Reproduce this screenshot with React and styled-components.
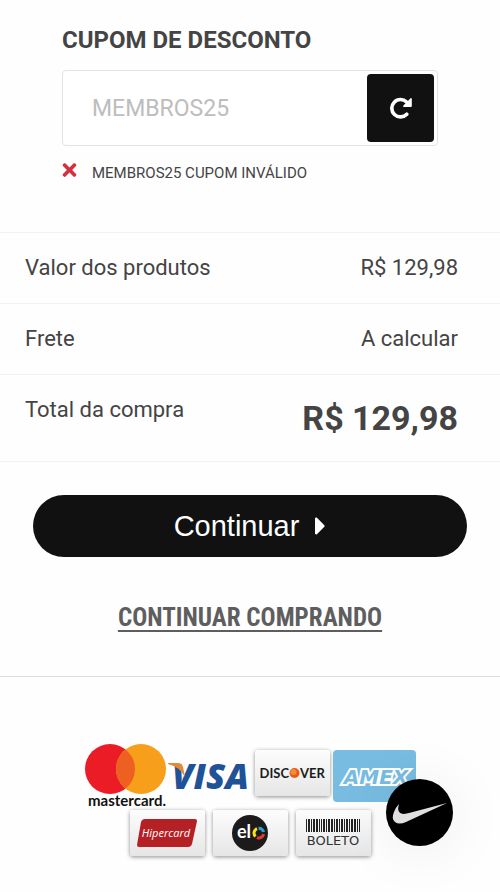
import React from 'react'
import styled, { createGlobalStyle } from 'styled-components'
import { FaCaretRight, FaTimes } from 'react-icons/fa'

const summary = [
  { label: 'Valor dos produtos', value: 'R$ 129,98' },
  { label: 'Frete', value: 'A calcular' },
  { label: 'Total da compra', value: 'R$ 129,98', total: true },
]

// [x, width] of every bar
const bars = [
  [0, 1], [2, 2], [5, 1], [7, 2], [10, 2], [13, 1], [15, 1], [17, 2], [20, 1], [22, 2], [25, 2],
  [28, 1], [30, 2], [33, 1], [35, 2], [38, 1], [40, 2], [43, 1], [45, 2], [48, 2], [51, 1], [53, 1],
]

const Reload = () => (
  <svg width="22" height="22" viewBox="0 0 22 22" aria-hidden="true">
    <path d="M16.600 5 A8.700 8.700 0 1 0 16.800 17.200" fill="none" stroke="#fff" strokeWidth="3.600" strokeLinecap="round" />
    <path d="M20.800 1 Q21.800 1 21.800 2 V9 Q21.800 10 20.800 10 H13.800 Q12.600 9.800 13.200 8.800 Z" fill="#fff" />
  </svg>
)

const Mastercard = () => (
  <svg width="81" height="64" viewBox="0 0 81 64" role="img" aria-label="Mastercard" overflow="visible">
    <circle cx="25" cy="25" r="25" fill="#eb1c26" />
    <circle cx="56" cy="25" r="25" fill="#f79e1b" />
    <path d="M40.500 5.400 A25 25 0 0 1 40.500 44.600 A25 25 0 0 1 40.500 5.400 Z" fill="#ee6022" />
    <text x="42" y="62" textAnchor="middle" fontFamily="Lato, sans-serif" fontWeight="700" fontSize="15" fill="#111">
      mastercard.
    </text>
  </svg>
)

const Visa = () => (
  <svg width="83" height="28" viewBox="0 0 83 28" role="img" aria-label="Visa" overflow="visible">
    <text x="3" y="27" fontFamily="Open Sans, sans-serif" fontWeight="800" fontStyle="italic" fontSize="35" fill="#1f5297">
      VISA
    </text>
    <path d="M-1 1 H9 Q13 1 14 5 L16 15 Q11 5 -1 2 Z" fill="#e08a3a" />
  </svg>
)

const Discover = () => (
  <svg width="71" height="20" viewBox="0 0 71 20" role="img" aria-label="Discover">
    <g fontFamily="Lato, sans-serif" fontWeight="700" fontSize="13" fill="#1b1b1b">
      <text x="32" y="15" textAnchor="end">DISC</text>
      <text x="43" y="15">VER</text>
    </g>
    <circle cx="37.500" cy="10" r="5" fill="#e8591f" />
    <circle cx="36.500" cy="9" r="3" fill="#f58a35" />
  </svg>
)

const Amex = () => (
  <svg width="83" height="52" viewBox="0 0 83 52" role="img" aria-label="Amex">
    <rect width="83" height="52" rx="4" fill="#78bce1" />
    <text
      x="43"
      y="34"
      textAnchor="middle"
      fontFamily="DejaVu Sans, sans-serif"
      fontWeight="700"
      fontStyle="italic"
      fontSize="20"
      fill="#78bce1"
      stroke="#fff"
      strokeWidth="4"
      paintOrder="stroke"
    >
      AMEX
    </text>
  </svg>
)

const Hipercard = () => (
  <svg width="62" height="28" viewBox="0 0 62 28" role="img" aria-label="Hipercard">
    <path d="M9 0 H59 Q61 0 61 2 L56 25 Q55 28 52 28 H3 Q1 28 1 26 L5 3 Q6 0 9 0 Z" fill="#b52025" />
    <text x="30" y="18" textAnchor="middle" fontFamily="Open Sans, sans-serif" fontStyle="italic" fontSize="11" fill="#fff">
      Hipercard
    </text>
  </svg>
)

const Elo = () => (
  <svg width="36" height="36" viewBox="0 0 36 36" role="img" aria-label="Elo">
    <circle cx="18" cy="18" r="18" fill="#1c1a1b" />
    <text x="5" y="23" fontFamily="Lato, sans-serif" fontWeight="700" fontSize="18" fill="#fff">
      el
    </text>
    <g fill="none" strokeWidth="3">
      <path d="M23.500 21.500 A4.800 4.800 0 0 1 25 13.600" stroke="#f2e21b" />
      <path d="M26.500 13.200 A4.800 4.800 0 0 1 31.600 17" stroke="#2a9fd8" />
      <path d="M31.600 19 A4.800 4.800 0 0 1 25 22.600" stroke="#e0392d" />
    </g>
  </svg>
)

const Boleto = () => (
  <svg width="56" height="28" viewBox="0 0 56 28" role="img" aria-label="Boleto">
    {bars.map(([x, w]) => (
      <rect key={x} x={x + 1} width={w} height="13" fill="#222" />
    ))}
    <text x="28" y="26" textAnchor="middle" fontFamily="DejaVu Sans, sans-serif" fontSize="13" fill="#333">
      BOLETO
    </text>
  </svg>
)

const App = () => {
  return (
    <>
      <GlobalStyle />
      <Page>
        <Coupon onSubmit={(e) => e.preventDefault()}>
          <CouponLabel htmlFor="coupon">CUPOM DE DESCONTO</CouponLabel>
          <CouponBox>
            <CouponInput id="coupon" placeholder="MEMBROS25" />
            <ReloadButton type="submit" aria-label="Aplicar cupom">
              <Reload />
            </ReloadButton>
          </CouponBox>
          <CouponError>
            <FaTimes />
            <span>MEMBROS25 CUPOM INVÁLIDO</span>
          </CouponError>
        </Coupon>

        <Summary>
          {summary.map((row) => (
            <SummaryRow key={row.label} $total={row.total}>
              <dt>{row.label}</dt>
              <dd>{row.value}</dd>
            </SummaryRow>
          ))}
        </Summary>

        <Actions>
          <ContinueButton type="button">
            Continuar
            <FaCaretRight />
          </ContinueButton>
          <ShopLink href="#produtos">CONTINUAR COMPRANDO</ShopLink>
        </Actions>

        <Footer>
          <PaymentRow>
            <Mastercard />
            <Visa />
            <PaymentCard>
              <Discover />
            </PaymentCard>
            <Amex />
          </PaymentRow>
          <PaymentRow $wide>
            <PaymentCard>
              <Hipercard />
            </PaymentCard>
            <PaymentCard>
              <Elo />
            </PaymentCard>
            <PaymentCard>
              <Boleto />
            </PaymentCard>
          </PaymentRow>
        </Footer>
      </Page>
      <ChatButton type="button" aria-label="Nike">
        <svg width="57" height="24" viewBox="0 0 57 24">
          <path d="M56 2 L15 21 Q8 24 4 21 Q0 18 3 11 Q5 6 8 3 Q5 12 12 13 Q14 13 18 12 Z" fill="#e0e0e0" />
        </svg>
      </ChatButton>
    </>
  )
}

export default App

const GlobalStyle = createGlobalStyle`
  * {
    box-sizing: border-box;
  }
  body {
    margin: 0;
    background: #fefefe;
    color: #444;
    font-family: Roboto, sans-serif;
  }
`
const Page = styled.main`
  display: flex;
  flex-direction: column;
`
const Coupon = styled.form`
  display: flex;
  flex-direction: column;
  padding: 24px 62px 46px;
`
const CouponLabel = styled.label`
  font-size: 24px;
  line-height: 32px;
  font-weight: 700;
`
const CouponBox = styled.div`
  display: flex;
  height: 76px;
  margin-top: 14px;
  padding: 3px;
  border: 1px solid #e2e2e2;
  border-radius: 4px;
  background: #fff;
`
const CouponInput = styled.input`
  flex: 1;
  min-width: 0;
  padding: 0 26px;
  border: 0;
  outline: 0;
  background: none;
  color: #444;
  font-family: inherit;
  font-size: 23px;

  &::placeholder {
    color: #bdbdbd;
    opacity: 1;
  }
`
const ReloadButton = styled.button`
  display: flex;
  align-items: center;
  justify-content: center;
  width: 67px;
  border: 0;
  border-radius: 4px;
  background: #111;
`
const CouponError = styled.p`
  display: flex;
  gap: 15px;
  margin: 14px 0 0;
  font-size: 15px;
  line-height: 26px;

  svg {
    width: 15px;
    height: 20px;
    color: #d32f3f;
  }
`
const Summary = styled.dl`
  margin: 0;
  border-top: 1px solid #f2f2f2;
`
const SummaryRow = styled.div`
  display: flex;
  justify-content: space-between;
  padding: 20px 42px 20px 25px;
  border-bottom: 1px solid #f2f2f2;
  font-size: 22px;
  line-height: 30px;

  dd {
    margin: 0;
    font-size: ${({ $total }) => ($total ? '34px' : '22px')};
    line-height: ${({ $total }) => ($total ? '46px' : '30px')};
    font-weight: ${({ $total }) => ($total ? 700 : 400)};
  }
`
const Actions = styled.div`
  display: flex;
  flex-direction: column;
  align-items: center;
  gap: 45px;
  padding: 33px 33px 42px;
`
const ContinueButton = styled.button`
  display: flex;
  align-items: center;
  justify-content: center;
  gap: 16px;
  width: 100%;
  height: 62px;
  border: 0;
  border-radius: 31px;
  background: #111;
  color: #fff;
  font-family: "Liberation Sans", sans-serif;
  font-size: 29px;

  svg {
    width: 11px;
    height: 30px;
  }
`
const ShopLink = styled.a`
  color: #5e5e5e;
  font-family: "Roboto Condensed", Roboto, sans-serif;
  font-size: 25px;
  line-height: 32px;
  font-weight: 700;
  text-decoration-thickness: 2px;
  text-underline-offset: 4px;
`
const Footer = styled.footer`
  display: flex;
  flex-direction: column;
  align-items: center;
  gap: 2px;
  padding: 67px 20px 24px;
  border-top: 1px solid #dedede;
`
const PaymentRow = styled.div`
  display: flex;
  align-items: center;
  gap: ${({ $wide }) => ($wide ? '8px' : '3px')};
`
const PaymentCard = styled.div`
  display: flex;
  align-items: center;
  justify-content: center;
  width: 75px;
  height: 46px;
  margin-bottom: 6px;
  border-radius: 3px;
  background: linear-gradient(#fdfdfd, #e6e6e6);
  box-shadow: 0 1px 4px rgba(0, 0, 0, 0.45);
`
const ChatButton = styled.button`
  position: fixed;
  right: 47px;
  bottom: 46px;
  display: flex;
  align-items: center;
  justify-content: center;
  width: 67px;
  height: 67px;
  padding: 0;
  border: 0;
  border-radius: 50%;
  background: #000;
  box-shadow: 0 4px 60px rgba(0, 0, 0, 0.08);
`
